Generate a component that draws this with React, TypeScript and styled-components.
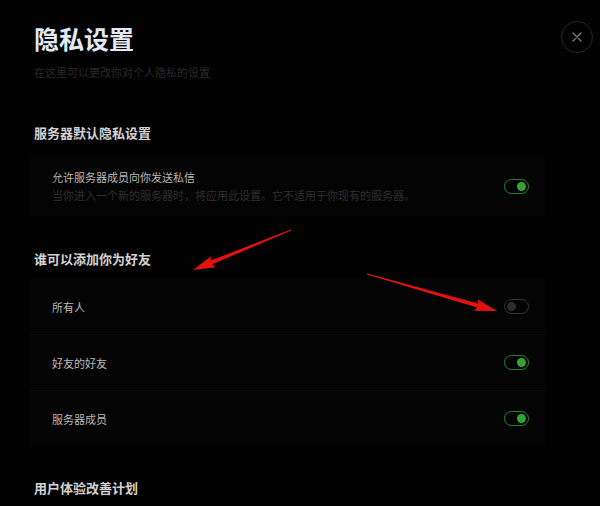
import React, { useState } from 'react'
import styled, { createGlobalStyle } from 'styled-components'

const GlobalStyle = createGlobalStyle`
    html, body {
        margin: 0;
        background: #020202;
    }
    body {
        font-family: "Noto Sans CJK SC", "Noto Sans", sans-serif;
    }
`

const Page = styled.div`
    position: relative;
    width: 600px;
    height: 506px;
    overflow: hidden;
    display: flex;
    background: #020202;
`

const Content = styled.div`
    flex: 1;
    padding: 23px 0 0 34px;
`

const Tools = styled.div`
    width: 55px;
    padding-top: 21px;
    display: flex;
    justify-content: flex-start;
    align-items: flex-start;
`

const CloseButton = styled.button`
    width: 32px;
    height: 32px;
    margin-left: 16px;
    border-radius: 50%;
    border: 1.5px solid #262626;
    background: transparent;
    color: #7a7a7a;
    display: flex;
    align-items: center;
    justify-content: center;
    padding: 0;
    cursor: pointer;
`

const Title = styled.h1`
    margin: 0;
    font-size: 25px;
    line-height: 30px;
    font-weight: 700;
    color: #e2e8f0;
`

const Subtitle = styled.div`
    margin-top: 11px;
    font-size: 11px;
    line-height: 16px;
    color: #2a2a2a;
`

const SectionTitle = styled.h2<{ $gap: number }>`
    margin: ${p => p.$gap}px 0 0;
    font-size: 13px;
    line-height: 20px;
    font-weight: 600;
    color: #d2d2d2;
`

const Rows = styled.div<{ $gap: number }>`
    margin: ${p => p.$gap}px 0 0 -4px;
`

const Row = styled.div<{ $tall?: boolean; $divider?: boolean }>`
    display: flex;
    align-items: center;
    justify-content: space-between;
    padding: ${p => (p.$tall ? '12px' : '0')} 16px ${p => (p.$tall ? '12px' : '0')} 22px;
    box-sizing: ${p => (p.$tall ? 'content-box' : 'border-box')};
    ${p => (p.$tall ? '' : 'height: 56px;')}
    background: #040404;
    border-bottom: 1px solid ${p => (p.$divider ? '#0c0c0c' : 'transparent')};
`

const Texts = styled.div`
    display: flex;
    flex-direction: column;
    gap: 2px;
`

const Label = styled.div`
    font-size: 11px;
    line-height: 16px;
    color: #b9b9b9;
`

const Note = styled.div`
    font-size: 11px;
    line-height: 16px;
    color: #2e2e2e;
`

const Track = styled.button<{ $on: boolean }>`
    width: 25px;
    height: 15px;
    border-radius: 8px;
    border: 1.5px solid ${p => (p.$on ? '#2b862b' : '#363636')};
    background: #030303;
    padding: 0 2px;
    display: flex;
    align-items: center;
    justify-content: ${p => (p.$on ? 'flex-end' : 'flex-start')};
    cursor: pointer;
    box-sizing: border-box;
`

const Knob = styled.span<{ $on: boolean }>`
    width: 9px;
    height: 9px;
    border-radius: 50%;
    background: ${p => (p.$on ? '#33a533' : '#2c2c2c')};
`

const Overlay = styled.svg`
    position: absolute;
    left: 0;
    top: 0;
    pointer-events: none;
`

const Toggle: React.FC<{ on: boolean; onChange: () => void }> = ({ on, onChange }) => (
    <Track $on={on} onClick={onChange}>
        <Knob $on={on} />
    </Track>
)

// annotation arrow: thin tapering shaft with a pointed head
const arrowPoints = (x1: number, y1: number, x2: number, y2: number) => {
    const dx = x2 - x1
    const dy = y2 - y1
    const len = Math.hypot(dx, dy)
    const ux = dx / len
    const uy = dy / len
    const nx = -uy
    const ny = ux
    const headLen = 20
    const headW = 6
    const bx = x2 - ux * headLen
    const by = y2 - uy * headLen
    const pts = [
        [x1 + nx * 0.5, y1 + ny * 0.5],
        [bx + nx * 2, by + ny * 2],
        [bx + nx * headW - ux * 2, by + ny * headW - uy * 2],
        [x2, y2],
        [bx - nx * headW - ux * 2, by - ny * headW - uy * 2],
        [bx - nx * 2, by - ny * 2],
        [x1 - nx * 0.5, y1 - ny * 0.5],
    ]
    return pts.map(p => p.join(',')).join(' ')
}

const App: React.FC = () => {
    const [dm, setDm] = useState(true)
    const [friends, setFriends] = useState([false, true, true])

    const friendRows = ['所有人', '好友的好友', '服务器成员']

    return (
        <Page>
            <GlobalStyle />
            <Content>
                <Title>隐私设置</Title>
                <Subtitle>在这里可以更改你对个人隐私的设置</Subtitle>

                <SectionTitle $gap={43}>服务器默认隐私设置</SectionTitle>
                <Rows $gap={14}>
                    <Row $tall>
                        <Texts>
                            <Label>允许服务器成员向你发送私信</Label>
                            <Note>当你进入一个新的服务器时，将应用此设置。它不适用于你现有的服务器。</Note>
                        </Texts>
                        <Toggle on={dm} onChange={() => setDm(!dm)} />
                    </Row>
                </Rows>

                <SectionTitle $gap={33}>谁可以添加你为好友</SectionTitle>
                <Rows $gap={10}>
                    {friendRows.map((label, i) => (
                        <Row key={`friend_${i}`} $divider={i < friendRows.length - 1}>
                            <Label>{label}</Label>
                            <Toggle
                                on={friends[i]}
                                onChange={() => setFriends(friends.map((f, j) => (j === i ? !f : f)))}
                            />
                        </Row>
                    ))}
                </Rows>

                <SectionTitle $gap={31}>用户体验改善计划</SectionTitle>
            </Content>
            <Tools>
                <CloseButton aria-label="关闭">
                    <svg width="10" height="10" viewBox="0 0 10 10">
                        <path d="M1 1 L9 9 M9 1 L1 9" stroke="currentColor" strokeWidth="1.4" strokeLinecap="round" />
                    </svg>
                </CloseButton>
            </Tools>
            <Overlay width="600" height="506" viewBox="0 0 600 506">
                <polygon points={arrowPoints(291, 230, 193, 270)} fill="#e3120f" />
                <polygon points={arrowPoints(367, 274, 497, 311)} fill="#e3120f" />
            </Overlay>
        </Page>
    )
}

export default App
